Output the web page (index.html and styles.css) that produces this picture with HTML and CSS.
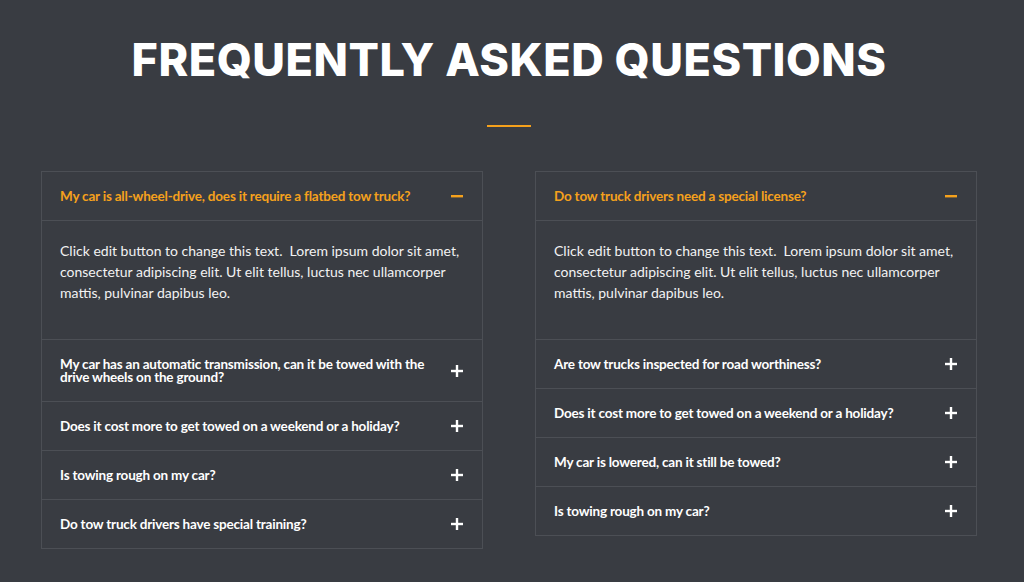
FILE: index.html
```html
<!DOCTYPE html>
<html lang="en">
<head>
  <meta charset="UTF-8">
  <title>Frequently Asked Questions</title>
  <link rel="stylesheet" href="styles.css">
</head>
<body>
  <section class="faq">
    <h1 class="faq-title">FREQUENTLY ASKED QUESTIONS</h1>
    <div class="faq-divider"></div>

    <div class="faq-cols">
      <div class="accordion">
        <div class="acc-item open">
          <div class="acc-head">
            <span class="acc-q">My car is all-wheel-drive, does it require a flatbed tow truck?</span>
            <svg class="acc-icon" viewBox="0 0 12 12"><rect x="0" y="5" width="12" height="2.4"/></svg>
          </div>
          <div class="acc-body">
            <p>Click edit button to change this text.&nbsp; Lorem ipsum dolor sit amet, consectetur adipiscing elit. Ut elit tellus, luctus nec ullamcorper mattis, pulvinar dapibus leo.</p>
          </div>
        </div>
        <div class="acc-item">
          <div class="acc-head">
            <span class="acc-q">My car has an automatic transmission, can it be towed with the drive wheels on the ground?</span>
            <svg class="acc-icon" viewBox="0 0 12 12"><rect x="0" y="4.8" width="12" height="2.4"/><rect x="4.8" y="0" width="2.4" height="12"/></svg>
          </div>
        </div>
        <div class="acc-item">
          <div class="acc-head">
            <span class="acc-q">Does it cost more to get towed on a weekend or a holiday?</span>
            <svg class="acc-icon" viewBox="0 0 12 12"><rect x="0" y="4.8" width="12" height="2.4"/><rect x="4.8" y="0" width="2.4" height="12"/></svg>
          </div>
        </div>
        <div class="acc-item">
          <div class="acc-head">
            <span class="acc-q">Is towing rough on my car?</span>
            <svg class="acc-icon" viewBox="0 0 12 12"><rect x="0" y="4.8" width="12" height="2.4"/><rect x="4.8" y="0" width="2.4" height="12"/></svg>
          </div>
        </div>
        <div class="acc-item">
          <div class="acc-head">
            <span class="acc-q">Do tow truck drivers have special training?</span>
            <svg class="acc-icon" viewBox="0 0 12 12"><rect x="0" y="4.8" width="12" height="2.4"/><rect x="4.8" y="0" width="2.4" height="12"/></svg>
          </div>
        </div>
      </div>

      <div class="accordion">
        <div class="acc-item open">
          <div class="acc-head">
            <span class="acc-q">Do tow truck drivers need a special license?</span>
            <svg class="acc-icon" viewBox="0 0 12 12"><rect x="0" y="5" width="12" height="2.4"/></svg>
          </div>
          <div class="acc-body">
            <p>Click edit button to change this text.&nbsp; Lorem ipsum dolor sit amet, consectetur adipiscing elit. Ut elit tellus, luctus nec ullamcorper mattis, pulvinar dapibus leo.</p>
          </div>
        </div>
        <div class="acc-item">
          <div class="acc-head">
            <span class="acc-q">Are tow trucks inspected for road worthiness?</span>
            <svg class="acc-icon" viewBox="0 0 12 12"><rect x="0" y="4.8" width="12" height="2.4"/><rect x="4.8" y="0" width="2.4" height="12"/></svg>
          </div>
        </div>
        <div class="acc-item">
          <div class="acc-head">
            <span class="acc-q">Does it cost more to get towed on a weekend or a holiday?</span>
            <svg class="acc-icon" viewBox="0 0 12 12"><rect x="0" y="4.8" width="12" height="2.4"/><rect x="4.8" y="0" width="2.4" height="12"/></svg>
          </div>
        </div>
        <div class="acc-item">
          <div class="acc-head">
            <span class="acc-q">My car is lowered, can it still be towed?</span>
            <svg class="acc-icon" viewBox="0 0 12 12"><rect x="0" y="4.8" width="12" height="2.4"/><rect x="4.8" y="0" width="2.4" height="12"/></svg>
          </div>
        </div>
        <div class="acc-item">
          <div class="acc-head">
            <span class="acc-q">Is towing rough on my car?</span>
            <svg class="acc-icon" viewBox="0 0 12 12"><rect x="0" y="4.8" width="12" height="2.4"/><rect x="4.8" y="0" width="2.4" height="12"/></svg>
          </div>
        </div>
      </div>
    </div>
  </section>
</body>
</html>
```

FILE: styles.css
```css
body { margin:0; background:#393c42; color:#fff; font-family:"Lato", "Liberation Sans", sans-serif; }
.faq { width:936px; margin-left:41px; padding-top:30px; }
.faq-title { margin:0; text-align:center; font-family:"Inter", "Liberation Sans", sans-serif; font-weight:800; font-size:45px; line-height:60px; letter-spacing:0.5px; }
.faq-divider { width:44px; height:2px; background:#f5a11c; margin:35px auto 44px; }

.faq-cols { display:grid; grid-template-columns:442px 442px; gap:52px; align-items:start; }
.accordion { border:1px solid #4c4f55; }
.acc-item + .acc-item { border-top:1px solid #4c4f55; }

.acc-head { display:flex; align-items:center; justify-content:space-between; gap:20px; padding:17.5px 18px; }
.acc-q { font-size:13.5px; font-weight:700; line-height:13px; color:#fff; letter-spacing:-0.2px; }
.acc-icon { width:12px; height:12px; flex:none; fill:#fff; margin-right:1px; }
.open .acc-q { color:#f5a11c; }
.open .acc-icon { fill:#f5a11c; }

.acc-body { border-top:1px solid #4c4f55; padding:19px 18px 36px; }
.acc-body p { margin:0; font-size:14px; line-height:21px; color:#f2f2f2; }
```
